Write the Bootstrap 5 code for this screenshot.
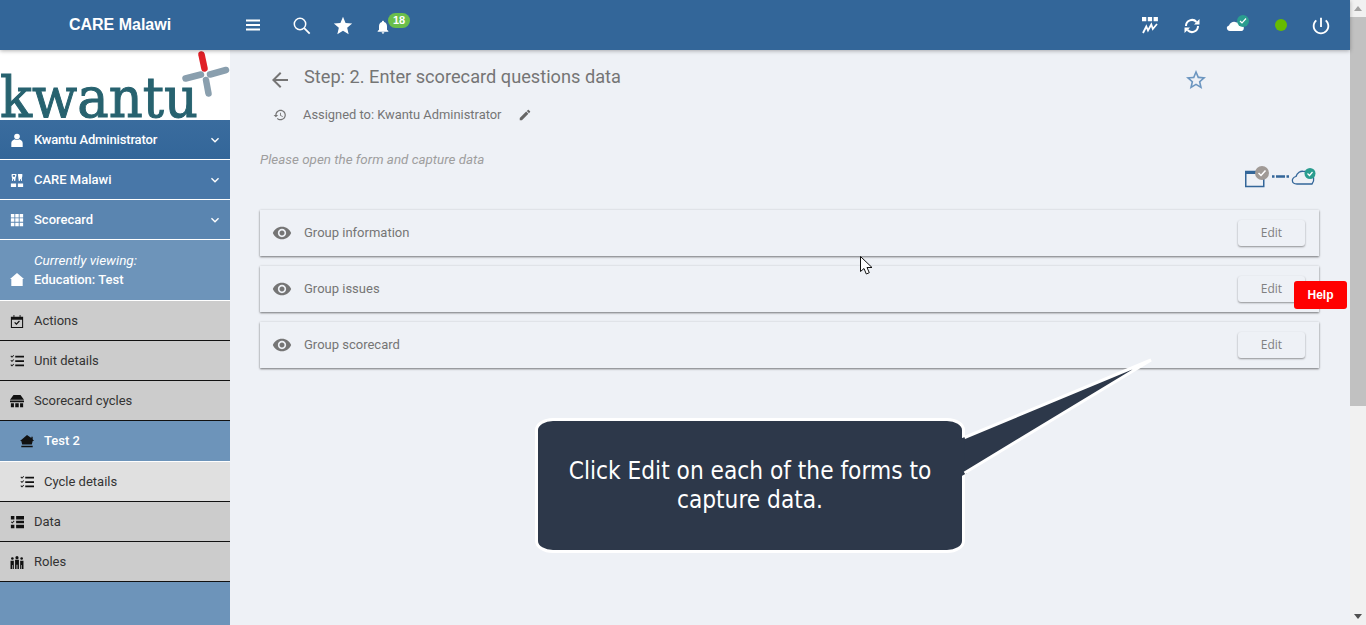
<!DOCTYPE html>
<html lang="en">
<head>
  <meta charset="UTF-8" />
  <title>Scorecard - Kwantu</title>
  <link href="https://cdn.jsdelivr.net/npm/bootstrap@5.3.3/dist/css/bootstrap.min.css" rel="stylesheet" />
  <style>
    html, body { height: 100%; overflow: hidden; }
    body { font-family: Roboto, "Liberation Sans", sans-serif; background: #eef1f6; color: #757575; }
    .shell-col, .page-main { min-width: 0; }
    .shell-row { min-height: 0; }

    /* top bar */
    .topbar { height: 50px; flex: none; background: #336699; color: #fff; box-shadow: 0 1px 4px rgba(0,0,0,.3); z-index: 5; position: relative; }
    .brand-box { width: 230px; font: bold 16px "Liberation Sans", sans-serif; text-align: center; padding-left: 10px; }
    .top-ico { fill: #fff; display: block; flex: none; }
    .ico-menu { margin-left: 16px; }
    .ico-search { margin-left: 33px; margin-top: 2px; }
    .ico-star { margin-left: 21px; margin-top: 1px; }
    .bell-wrap { position: relative; margin-left: 21px; margin-top: 4px; }
    .bell-count { position: absolute; left: 13px; top: -6px; width: 22px; height: 15px; border-radius: 8px; background: #6abf4b; font: bold 11px/15px "Liberation Sans", sans-serif; text-align: center; color: #fff; }
    .right-icons { padding-right: 18px; }
    .ico-sync { margin-left: 25px; margin-top: 2px; }
    .cloud-wrap { position: relative; width: 22px; margin-left: 26px; }
    .mini-check { position: absolute; left: 11px; top: -4px; width: 12px; height: 12px; border-radius: 50%; background: #2a9d8f; display: flex; align-items: center; justify-content: center; }
    .green-dot { width: 12px; height: 12px; border-radius: 50%; background: #66bb00; margin-left: 27px; }
    .ico-power { margin-left: 23px; margin-top: 2px; }

    /* side menu */
    .side-menu { width: 230px; flex: none; background: #6d94ba; font-size: 13px; }
    .logo-box { height: 70px; background: #fff; }
    .logo-box svg { display: block; overflow: visible; }
    .side-row { height: 40px; padding-left: 10px; padding-right: 9px; font-weight: 500; color: #fff; border-bottom: 1px solid #fff; position: relative; }
    .side-row svg.mi { width: 14px; height: 16px; margin-right: 10px; flex: none; }
    .side-row.c1 { background: linear-gradient(#3a6c9e, #336699); letter-spacing: -.15px; }
    .side-row.c2 { background: #4877a8; }
    .side-row.c3 { background: #5a85b0; }
    .side-row.viewing { height: 61px; background: #6d94ba; align-items: flex-end; padding-bottom: 10px; line-height: 20px; }
    .side-row.viewing em { font-weight: 400; font-size: 13.5px; display: block; }
    .side-row.viewing svg.mi { margin-bottom: 3px; }
    .side-row.grey { background: #cccccc; color: #333; font-weight: 400; border-bottom-color: #111; }
    .side-row.sub { padding-left: 20px; }
    .side-row.blue-sub { height: 41px; background: #6d94ba; color: #fff; border-bottom-color: #fff; font-weight: 500; }
    .side-row.light-sub { background: #e0e0e0; color: #333; font-weight: 400; border-bottom-color: #111; }
    .side-row .chev { margin-left: auto; margin-right: -2px; }

    /* content */
    .page-main { padding: 15px 31px 0 30px; position: relative; }
    .title-row { height: 30px; padding-left: 8px; }
    .step-title { font-size: 18.2px; font-weight: 400; color: #757575; margin: 0 0 0 12px; line-height: 24px; position: relative; top: -3px; }
    .fav-star { margin-right: 111px; }
    .assigned-row { font-size: 12.9px; margin-top: 8px; height: 24px; padding-left: 13px; }
    .assigned-name { margin-left: 16px; }
    .ico-pencil { margin-left: 17px; }
    .hint-text { font-size: 13.4px; font-style: italic; color: #9e9e9e; margin: 23px 0 0; line-height: 20px; }
    .status-row { height: 22px; margin-top: -4px; padding-right: 2px; margin-bottom: 22px; }
    .form-strip { height: 46px; background: #eef1f6; box-shadow: 0 1px 2px rgba(0,0,0,.5), 0 0 3px rgba(0,0,0,.06); margin-bottom: 10px; padding: 0 14px 0 12px; font-size: 13px; }
    .form-strip svg { fill: #757575; margin-right: 12px; }
    .edit-btn { width: 67px; height: 26px; padding: 0; margin-left: auto; border: 0; border-radius: 3px; background: #eef1f6; color: #808080; font: 12px/26px "Open Sans", sans-serif; box-shadow: 0 1px 2px rgba(0,0,0,.4); }

    /* overlays */
    .help-tab { position: absolute; left: 1294px; top: 281px; width: 53px; height: 28px; background: #ff0000; color: #fff; border-radius: 3px; font: bold 12px/28px "Liberation Sans", sans-serif; text-align: center; z-index: 6; }
    .tip-box { position: absolute; left: 535px; top: 418px; width: 430px; height: 135px; box-sizing: border-box; border: 3px solid #fff; border-radius: 18px / 12px; background: #2d384a; color: #fff; font: 24.2px/29px "DejaVu Sans Condensed", "DejaVu Sans", sans-serif; text-align: center; display: flex; align-items: center; justify-content: center; padding: 0 20px; z-index: 6; }
    .tip-tail { position: absolute; left: 950px; top: 350px; z-index: 7; }
    .mouse-arrow { position: absolute; left: 860px; top: 256px; z-index: 7; }

    /* window scrollbar */
    .fake-scroll { width: 16px; flex: none; background: #f1f1f1; }
    .fake-thumb { height: 389px; background: #c1c1c1; }
    .fake-arrow { height: 17px; }
  </style>
</head>
<body class="d-flex">

  <svg width="0" height="0" class="position-absolute">
    <symbol id="i-person" viewBox="0 0 16 16"><circle cx="8" cy="4" r="3.200"/><path d="M1.500 16v-4.500C1.500 9 4 7.600 5.500 7.200 6.500 8 9.500 8 10.500 7.200c1.500.4 4 1.800 4 4.300V16z"/></symbol>
    <symbol id="i-org" viewBox="0 0 16 16"><path fill-rule="evenodd" d="M2 1h5c.5 0 .5 1 .3 2L6.500 5.500 6 9H4.800L4.500 7h-1L3.200 9H2.300L2.500 6C2 4.500 1.500 3 2 1zm1.200 1.200v2h2.600v-2zM9 1h5c.4 1.500 0 3.500-.5 5l.2 3h-.9l-.3-2h-1l-.3 2H10l-.5-3.500zM1 12h6v4H1zM9 12h6v4H9z"/></symbol>
    <symbol id="i-grid" viewBox="0 0 16 16"><path d="M1 1h4v4H1zM6 1h4v4H6zM11 1h4v4h-4zM1 6h4v4H1zM6 6h4v4H6zM11 6h4v4h-4zM1 11h4v4H1zM6 11h4v4H6zM11 11h4v4h-4z"/></symbol>
    <symbol id="i-home" viewBox="0 0 16 16"><path d="M8 1 16 8h-1.500v8h-13V8H0z"/></symbol>
    <symbol id="i-cal" viewBox="0 0 16 16"><path d="M1 3h3V1h1v2h6V1h1v2h3v13H1zm1.200 3.500v8.300h11.600V6.500z"/><path d="m4.800 10 1-1 1.500 1.600 3-3.100 1 1-4 4.200z"/></symbol>
    <symbol id="i-list" viewBox="0 0 16 16"><path d="M6 2h10v2H6zM6 7h10v2H6zM6 12h10v2H6z"/><path d="m.5 2.500.8-.7 1 1L4 1l.7.700L2.300 4.200zM.5 7.500l.8-.7 1 1L4 6l.7.700L2.300 9.200zM.5 12.500l.8-.7 1 1L4 11l.7.700-2.400 2.500z"/></symbol>
    <symbol id="i-shop" viewBox="0 0 16 16"><path d="M4 1h8l4 5.500H0zM0 7.500h16v2H0zM1 10.500h3.500V15H1zM6 10.500h4V15H6zM11.500 10.500H15V15h-3.500z"/></symbol>
    <symbol id="i-roof" viewBox="0 0 16 16"><path d="M8 1 13 4.500V3h1.500v3L16 8H14.500l-1 4h-11l-1-4H0zM1.500 13.500h13V15h-13z"/></symbol>
    <symbol id="i-data" viewBox="0 0 16 16"><path d="M1 1h4v4H1zM7 1h9v4H7zM7 6.500h9v3H7zM1 11h4v4H1zM7 11h9v4H7z"/><path d="m1 8 .7-.7.9.9L4.400 6.300l.7.700L2.600 9.600z"/></symbol>
    <symbol id="i-people" viewBox="0 0 16 16"><circle cx="8" cy="3" r="1.800"/><circle cx="2.700" cy="4" r="1.500"/><circle cx="13.300" cy="4" r="1.500"/><path d="M5.800 5.500h4.400V16H8.500v-5h-1v5H5.800zM.6 6.500h3.800V16H3v-4.500H2.300V16H.6zM11.600 6.500h3.800V16h-1.700v-4.500H13V16h-1.400z"/></symbol>
    <symbol id="i-chev" viewBox="0 0 24 24"><path d="M16.590 8.590 12 13.170 7.410 8.590 6 10l6 6 6-6z"/></symbol>
    <symbol id="i-eye" viewBox="0 0 24 24"><path d="M12 4.500C7 4.500 2.730 7.610 1 12c1.730 4.390 6 7.500 11 7.500s9.270-3.110 11-7.500c-1.730-4.390-6-7.500-11-7.500zM12 17c-2.760 0-5-2.240-5-5s2.240-5 5-5 5 2.240 5 5-2.240 5-5 5zm0-8c-1.660 0-3 1.340-3 3s1.340 3 3 3 3-1.340 3-3-1.340-3-3-3z"/></symbol>
  </svg>

  <div class="shell-col flex-grow-1 d-flex flex-column">
    <header class="topbar d-flex align-items-center">
      <div class="brand-box">CARE Malawi</div>
      <div class="d-flex align-items-center">
        <svg class="top-ico ico-menu" width="14" height="14" viewBox="0 0 14 14"><path d="M0 1.500h14v2H0zM0 6h14v2H0zM0 10.500h14v2H0z"/></svg>
        <svg class="top-ico ico-search" width="18" height="18" viewBox="0 0 18 18"><circle cx="7" cy="7" r="5.700" fill="none" stroke="#fff" stroke-width="1.500"/><path d="m11.200 11.200 5.500 5.500" fill="none" stroke="#fff" stroke-width="1.800"/></svg>
        <svg class="top-ico ico-star" width="22" height="22" viewBox="0 0 24 24"><path d="M12 17.270 18.180 21l-1.640-7.030L22 9.240l-7.190-.61L12 2 9.190 8.630 2 9.240l5.460 4.730L5.820 21z"/></svg>
        <div class="bell-wrap">
          <svg class="top-ico" width="16" height="16" viewBox="0 0 24 24"><path d="M12 22c1.100 0 2-.9 2-2h-4c0 1.100.9 2 2 2zm6-6v-5c0-3.070-1.630-5.640-4.500-6.320V4c0-.83-.67-1.500-1.500-1.500s-1.500.67-1.500 1.500v.68C7.640 5.360 6 7.920 6 11v5l-2 2v1h16v-1l-2-2z"/></svg>
          <span class="bell-count">18</span>
        </div>
      </div>
      <div class="right-icons ms-auto d-flex align-items-center">
        <svg class="top-ico" width="18" height="18" viewBox="0 0 18 18"><path d="M1 1h4.300v4.300H1zM6.800 1h4.300v4.300H6.800zM12.600 1h4.300v4.300h-4.300z"/><path d="m2 17 3.300-6.500 1.700 4 3.300-6 1.500 4.500 4.200-5" fill="none" stroke="#fff" stroke-width="1.800"/></svg>
        <svg class="top-ico ico-sync" width="16" height="16" viewBox="0 0 16 16"><path d="M2 8a6 6 0 0 1 10.500-4M14 8a6 6 0 0 1-10.500 4" fill="none" stroke="#fff" stroke-width="2"/><path d="M15.500 1v5.500H10zM.5 15V9.500H6z"/></svg>
        <div class="cloud-wrap">
          <svg class="top-ico" width="22" height="12" viewBox="0 0 22 12"><path d="M4 12C.5 12-.5 7.500 3 6.500 4.500 3 8 2 10.500 3.500 13 2.500 15 4 16 6c2.500.3 2.500 6-.5 6z"/></svg>
          <span class="mini-check"><svg width="8" height="8" viewBox="0 0 8 8"><path d="m1 4 2 2 4-4.500" fill="none" stroke="#fff" stroke-width="1.200"/></svg></span>
        </div>
        <span class="green-dot"></span>
        <svg class="top-ico ico-power" width="22" height="22" viewBox="0 0 24 24"><path d="M13 3h-2v10h2V3zm4.830 2.170-1.420 1.420C17.990 7.860 19 9.810 19 12c0 3.870-3.130 7-7 7s-7-3.130-7-7c0-2.190 1.010-4.140 2.580-5.420L6.170 5.170C4.230 6.820 3 9.260 3 12c0 4.970 4.030 9 9 9s9-4.030 9-9c0-2.740-1.230-5.180-3.170-6.830z"/></svg>
      </div>
    </header>

    <div class="shell-row d-flex flex-grow-1">
      <nav class="side-menu">
        <div class="logo-box">
          <svg width="230" height="70" viewBox="0 50 230 70">
            <text x="0" y="117" font-family="'DejaVu Serif', serif" font-size="56" fill="#27626f" stroke="#27626f" stroke-width="1" textLength="198" lengthAdjust="spacingAndGlyphs">kwantu</text>
            <g stroke-width="6.500" stroke-linecap="round" fill="none">
              <path d="M201.500 54.500 204.500 68.500" stroke="#e02027"/>
              <path d="M210 74.500 226 70M185.500 78.500 201 74.500M206 80 208.500 93.500" stroke="#8a9fae"/>
            </g>
          </svg>
        </div>
        <div class="side-row c1 d-flex align-items-center"><svg class="mi" fill="#fff"><use href="#i-person"/></svg>Kwantu Administrator<svg class="chev" width="16" height="16" fill="#fff"><use href="#i-chev"/></svg></div>
        <div class="side-row c2 d-flex align-items-center"><svg class="mi" fill="#fff"><use href="#i-org"/></svg>CARE Malawi<svg class="chev" width="16" height="16" fill="#fff"><use href="#i-chev"/></svg></div>
        <div class="side-row c3 d-flex align-items-center"><svg class="mi" fill="#fff"><use href="#i-grid"/></svg>Scorecard<svg class="chev" width="16" height="16" fill="#fff"><use href="#i-chev"/></svg></div>
        <div class="side-row viewing d-flex"><svg class="mi" fill="#fff"><use href="#i-home"/></svg><span><em>Currently viewing:</em>Education: Test</span></div>
        <div class="side-row grey d-flex align-items-center"><svg class="mi" fill="#111"><use href="#i-cal"/></svg>Actions</div>
        <div class="side-row grey d-flex align-items-center"><svg class="mi" fill="#111"><use href="#i-list"/></svg>Unit details</div>
        <div class="side-row grey d-flex align-items-center"><svg class="mi" fill="#111"><use href="#i-shop"/></svg>Scorecard cycles</div>
        <div class="side-row sub blue-sub d-flex align-items-center"><svg class="mi" fill="#111"><use href="#i-roof"/></svg>Test 2</div>
        <div class="side-row sub light-sub d-flex align-items-center"><svg class="mi" fill="#111"><use href="#i-list"/></svg>Cycle details</div>
        <div class="side-row grey d-flex align-items-center"><svg class="mi" fill="#111"><use href="#i-data"/></svg>Data</div>
        <div class="side-row grey d-flex align-items-center"><svg class="mi" fill="#111"><use href="#i-people"/></svg>Roles</div>
      </nav>

      <main class="page-main flex-grow-1">
        <div class="title-row d-flex align-items-center">
          <svg width="24" height="24" viewBox="0 0 24 24" fill="#757575"><path d="M20 11H7.830l5.590-5.590L12 4l-8 8 8 8 1.410-1.410L7.830 13H20v-2z"/></svg>
          <h1 class="step-title">Step: 2. Enter scorecard questions data</h1>
          <svg class="fav-star ms-auto" width="24" height="24" viewBox="0 0 24 24" fill="#6c96c0"><path d="M22 9.240l-7.190-.62L12 2 9.190 8.630 2 9.240l5.460 4.730L5.820 21 12 17.270 18.180 21l-1.630-7.030L22 9.240zM12 15.400l-3.760 2.270 1-4.280-3.320-2.880 4.380-.38L12 6.100l1.710 4.040 4.380.38-3.320 2.880 1 4.280L12 15.400z"/></svg>
        </div>
        <div class="assigned-row d-flex align-items-center">
          <svg width="14" height="14" viewBox="0 0 24 24" fill="#757575"><path d="M13 3c-4.970 0-9 4.030-9 9H1l3.890 3.890.07.14L9 12H6c0-3.870 3.130-7 7-7s7 3.130 7 7-3.130 7-7 7c-1.930 0-3.680-.79-4.940-2.060l-1.420 1.420C8.270 19.990 10.510 21 13 21c4.970 0 9-4.030 9-9s-4.030-9-9-9zm-1 5v5l4.280 2.540.72-1.210-3.500-2.080V8H12z"/></svg>
          <span class="assigned-name">Assigned to: Kwantu Administrator</span>
          <svg class="ico-pencil" width="14" height="14" viewBox="0 0 24 24" fill="#666"><path d="M3 17.250V21h3.750L17.810 9.940l-3.750-3.750L3 17.250zM20.710 7.040c.39-.39.39-1.020 0-1.410l-2.340-2.340c-.39-.39-1.020-.39-1.410 0l-1.830 1.830 3.750 3.750 1.830-1.830z"/></svg>
        </div>
        <p class="hint-text">Please open the form and capture data</p>
        <div class="status-row d-flex justify-content-end align-items-end">
          <svg width="72" height="22" viewBox="0 0 72 22">
            <path d="M.75 5.500h18v15h-18z" fill="none" stroke="#336699" stroke-width="1.500"/>
            <path d="M1 5.500h18v2.500H1z" fill="#336699"/>
            <circle cx="17" cy="7" r="7" fill="#a09a96"/>
            <path d="m13.500 7 2.500 2.500 4.500-5" fill="none" stroke="#fff" stroke-width="1.500"/>
            <path d="M27 10.500h2.500M31 10.500h9M41.500 10.500H44" stroke="#336699" stroke-width="2.500"/>
            <path d="M52 18c-6 0-6-6-1-7.500 1-3.500 4.500-6 8-5 3-.5 5 1 6 3 4 .5 5 5.500 2 9.500z" fill="none" stroke="#336699" stroke-width="1.300"/>
            <circle cx="65" cy="7.500" r="5.500" fill="#2a9d8f"/>
            <path d="m62.500 7.500 2 2 3-3.500" fill="none" stroke="#fff" stroke-width="1.200"/>
          </svg>
        </div>

        <section class="form-strip d-flex align-items-center"><svg width="20" height="20"><use href="#i-eye"/></svg>Group information<button type="button" class="btn edit-btn">Edit</button></section>
        <section class="form-strip d-flex align-items-center"><svg width="20" height="20"><use href="#i-eye"/></svg>Group issues<button type="button" class="btn edit-btn">Edit</button></section>
        <section class="form-strip d-flex align-items-center"><svg width="20" height="20"><use href="#i-eye"/></svg>Group scorecard<button type="button" class="btn edit-btn">Edit</button></section>
      </main>
    </div>
  </div>

  <div class="fake-scroll d-flex flex-column">
    <div class="fake-arrow d-flex align-items-center justify-content-center"><svg width="8" height="5"><path d="M4 0 8 5H0z" fill="#a3a3a3"/></svg></div>
    <div class="fake-thumb"></div>
    <div class="fake-arrow d-flex align-items-center justify-content-center mt-auto"><svg width="8" height="5"><path d="M4 5 8 0H0z" fill="#505050"/></svg></div>
  </div>

  <!-- overlays: help tab, walkthrough callout, mouse pointer -->
  <div class="help-tab">Help</div>
  <div class="tip-box">Click Edit on each of the forms to capture data.</div>
  <svg class="tip-tail" width="210" height="135" viewBox="950 350 210 135">
    <path d="M960 439 967 436V473L960 477z" fill="#2d384a"/>
    <path d="M964.500 437.500 1151 360 964.500 473" fill="#2d384a" stroke="#fff" stroke-width="3"/>
  </svg>
  <svg class="mouse-arrow" width="14" height="20" viewBox="0 0 14 20"><path d="M.5.500v15l3.500-3 2.300 5.500 3-1.300-2.300-5.200h5z" fill="#fff" stroke="#111" stroke-width="1"/></svg>

</body>
</html>
